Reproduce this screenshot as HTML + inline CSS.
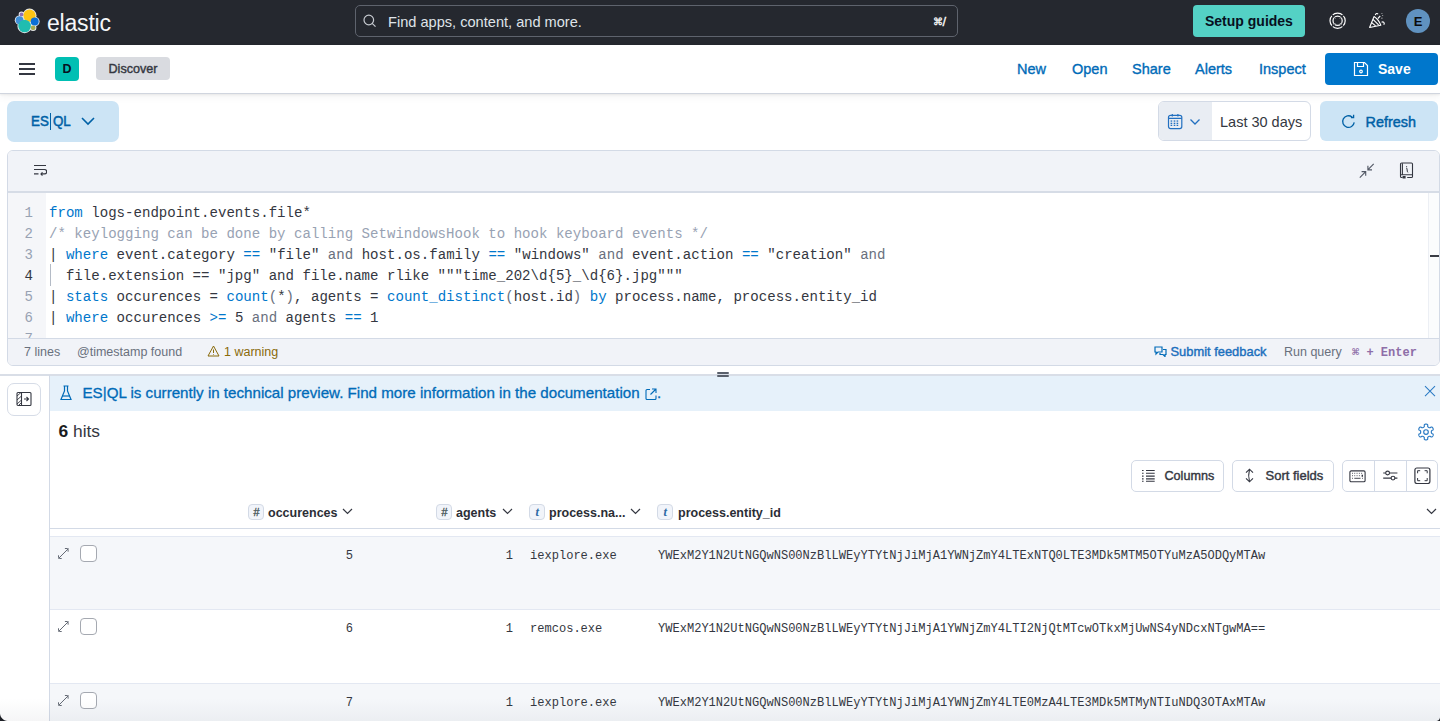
<!DOCTYPE html>
<html><head><meta charset="utf-8">
<style>
*{box-sizing:border-box;margin:0;padding:0}
html,body{width:1440px;height:721px;overflow:hidden;background:#fff;font-family:"Liberation Sans",sans-serif;color:#343741}
.a{position:absolute}
.mono{font-family:"Liberation Mono",monospace}
svg{display:block}
#hdr{left:0;top:0;width:1440px;height:45px;background:#25282f}
#nav2{left:0;top:45px;width:1440px;height:49px;background:#fff;border-bottom:1.5px solid #d0d5de;box-shadow:0 1px 2px rgba(0,0,0,.06),0 3px 8px rgba(0,0,0,.05)}
.lnk{color:#006bb8;font-size:14.5px;top:59.5px;line-height:18px;-webkit-text-stroke:0.35px #006bb8}
#editor{left:7px;top:150px;width:1433px;height:216px;border:1px solid #d3dae6;border-radius:6px;overflow:hidden;background:#fff}
#edhead{left:0;top:0;width:1431px;height:42px;background:#f1f3f8;border-bottom:2px solid #d6dce6}
#gutter{left:0;top:42px;width:38px;height:146px;background:#f5f6f9}
#edfoot{left:0;top:187px;width:1431px;height:28px;background:#f1f3f8;border-top:1px solid #d3dae6}
.code{font-size:14.08px;line-height:21px;white-space:pre;color:#343741}
.kw{color:#0077cc}
.cm{color:#98a2b3}
.op{color:#0077cc}
.gr{color:#69707d}
.ln{font-size:14px;line-height:21px;color:#98a2b3;text-align:right;width:26px}
.ft{font-size:12.5px;color:#69707d;top:344px;line-height:16px}
</style></head>
<body>
<!-- top header -->
<div id="hdr" class="a"></div>
<!-- logo -->
<svg class="a" style="left:14px;top:8px" width="26" height="26" viewBox="0 0 26 26"><g fill="#e9ebee"><circle cx="15.5" cy="7.6" r="7.0"/><circle cx="5.6" cy="12.2" r="4.8"/><circle cx="20.7" cy="13.6" r="4.9"/><circle cx="10.6" cy="18.0" r="7.2"/><circle cx="19.1" cy="19.8" r="3.3"/><circle cx="7.5" cy="6.4" r="2.8"/><path d="M9 9L19 11L17 17L9 15Z"/></g><circle cx="15.5" cy="7.6" r="6.1" fill="#fec514"/><circle cx="5.6" cy="12.2" r="3.9" fill="#3f8fd8"/><circle cx="20.7" cy="13.6" r="4.0" fill="#0b6fd6"/><circle cx="10.6" cy="18.0" r="6.3" fill="#1fbdb0"/><circle cx="19.1" cy="19.8" r="2.4" fill="#a9ab4f"/><circle cx="7.5" cy="6.4" r="1.9" fill="#9170b8"/></svg>
<div class="a" style="left:47px;top:6.5px;font-size:23px;color:#f5f7fa;line-height:32px;letter-spacing:-0.2px">elastic</div>
<!-- search -->
<div class="a" style="left:355px;top:5px;width:603px;height:32px;border:1.3px solid #5e636d;border-radius:5px;background:#25282f"></div>
<svg class="a" style="left:362px;top:13px" width="16" height="16" viewBox="0 0 16 16" fill="none" stroke="#c7cbd1" stroke-width="1.2"><circle cx="6.8" cy="7" r="4.8"/><path d="M10.2 10.4l3.3 3.3"/></svg>
<div class="a" style="left:388px;top:13px;font-size:14.6px;color:#dfe3e8;line-height:18px">Find apps, content, and more.</div>
<div class="a" style="left:933px;top:16px;font-size:10px;font-weight:bold;color:#f0f0f0;line-height:12px">&#8984;</div><div class="a" style="left:942.5px;top:15px;font-size:13px;color:#fff;line-height:14px;-webkit-text-stroke:0.3px #fff">/</div>
<!-- setup guides -->
<div class="a" style="left:1193px;top:5px;width:112px;height:32px;background:#54d1c5;border-radius:4px"></div>
<div class="a" style="left:1205px;top:12px;font-size:14px;font-weight:bold;color:#07101f;line-height:18px">Setup guides</div>
<!-- help icon -->
<svg class="a" style="left:1329px;top:12px" width="18" height="18" viewBox="0 0 18 18" fill="none" stroke="#fff" stroke-width="1.2"><circle cx="8.6" cy="8.8" r="7.6"/><circle cx="8.6" cy="8.8" r="4.6"/><path d="M2.6 2.8l3.2 3.2M14.6 2.8l-3.2 3.2M2.6 14.8l3.2-3.2M14.6 14.8l-3.2-3.2" stroke="#25282f" stroke-width="1.3"/><path d="M4.9 5.1l1.3 1.3M12.3 5.1l-1.3 1.3M4.9 12.5l1.3-1.3M12.3 12.5l-1.3-1.3" stroke-width="0.9"/></svg>
<!-- party icon -->
<svg class="a" style="left:1368px;top:12px" width="19" height="17" viewBox="0 0 19 17" fill="none" stroke="#fff" stroke-width="1.15" stroke-linejoin="round"><path d="M1.6 15.5L6 4.6Q10.5 7.5 12.8 13.2Z"/><path d="M3.7 10.6l3.9 3.3M5 7.4l5.6 5.4"/><path d="M7.3 3.1c.3-1.6 2.1-2.2 2.7-.9M9.8 6.6l2.4-2.6M13.9 1v.6M14.6 3.4v.6M13.9 5.8v.6M13.6 10.2c1.7-.8 3.5.6 2.2 2.6"/></svg>
<!-- avatar -->
<div class="a" style="left:1406px;top:9px;width:24px;height:24px;border-radius:50%;background:#6092c0;color:#0b0c0e;font-size:13px;font-weight:bold;text-align:center;line-height:25px">E</div>

<!-- nav 2 -->
<div id="nav2" class="a"></div>
<div class="a" style="left:19px;top:63px;width:16px;height:2px;background:#343741"></div>
<div class="a" style="left:19px;top:68px;width:16px;height:2px;background:#343741"></div>
<div class="a" style="left:19px;top:73px;width:16px;height:2px;background:#343741"></div>
<div class="a" style="left:55px;top:57px;width:24px;height:24px;border-radius:4px;background:#00bfb3;color:#07101f;font-size:12.5px;font-weight:bold;text-align:center;line-height:24px">D</div>
<div class="a" style="left:96px;top:57px;width:74px;height:23px;border-radius:4px;background:#d9dbe0;color:#343741;font-size:12.6px;-webkit-text-stroke:0.4px #343741;text-align:center;line-height:24px">Discover</div>
<div class="a lnk" style="left:1017px">New</div>
<div class="a lnk" style="left:1072px">Open</div>
<div class="a lnk" style="left:1132px">Share</div>
<div class="a lnk" style="left:1195px">Alerts</div>
<div class="a lnk" style="left:1259px">Inspect</div>
<div class="a" style="left:1325px;top:53px;width:113px;height:32px;border-radius:4px;background:#0077cc"></div>
<svg class="a" style="left:1353px;top:61px" width="16" height="16" viewBox="0 0 16 16" fill="none" stroke="#fff" stroke-width="1.2"><path d="M1.5 1.5h10l3 3v10h-13z"/><path d="M4.5 1.5v4h6v-4"/><circle cx="8" cy="10.5" r="1.3"/></svg>
<div class="a" style="left:1378px;top:59.5px;font-size:14px;font-weight:bold;color:#fff;line-height:18px">Save</div>

<!-- ES|QL button -->
<div class="a" style="left:7px;top:101px;width:112px;height:41px;border-radius:7px;background:#cce4f5"></div>
<div class="a" style="left:30.5px;top:112px;font-size:15.5px;color:#0061a6;line-height:18px;-webkit-text-stroke:0.55px #0061a6;transform:scaleX(0.86);transform-origin:0 0">ES</div>
<div class="a" style="left:50px;top:113px;width:1.4px;height:16.5px;background:#0061a6"></div>
<div class="a" style="left:53px;top:112px;font-size:15.5px;color:#0061a6;line-height:18px;-webkit-text-stroke:0.55px #0061a6;transform:scaleX(0.86);transform-origin:0 0">QL</div>
<svg class="a" style="left:81px;top:116px" width="14" height="10" viewBox="0 0 14 10" fill="none" stroke="#0061a6" stroke-width="1.6"><path d="M1 2l6 6 6-6"/></svg>

<!-- date picker -->
<div class="a" style="left:1158px;top:101px;width:153px;height:40px;border:1px solid #d3dae6;border-radius:6px;background:#fff;overflow:hidden"><div class="a" style="left:0;top:0;width:53px;height:38px;background:#e9edf3"></div></div>
<svg class="a" style="left:1167px;top:113px" width="16" height="17" viewBox="0 0 16 17"><g fill="none" stroke="#2270c0" stroke-width="1.2"><rect x="1.5" y="2.3" width="13.3" height="13.3" rx="2"/><path d="M1.5 5.3h13.3M5.3 1v2.6M10.9 1v2.6"/></g><g fill="#2270c0"><rect x="3.6" y="7.4" width="1.6" height="1.3"/><rect x="3.6" y="9.7" width="1.6" height="1.3"/><rect x="3.6" y="11.7" width="1.6" height="1.3"/><rect x="6.7" y="7.4" width="1.6" height="1.3"/><rect x="6.7" y="9.7" width="1.6" height="1.3"/><rect x="6.7" y="11.7" width="1.6" height="1.3"/><rect x="9.6" y="7.4" width="1.6" height="1.3"/><rect x="9.6" y="9.7" width="1.6" height="1.3"/><rect x="9.6" y="11.7" width="1.6" height="1.3"/></g></svg>
<svg class="a" style="left:1189px;top:118px" width="12" height="8" viewBox="0 0 12 8" fill="none" stroke="#2270c0" stroke-width="1.3"><path d="M1.5 1.5l4.5 4.5 4.5-4.5"/></svg>
<div class="a" style="left:1220px;top:112.7px;font-size:14.5px;color:#343741;line-height:18px">Last 30 days</div>
<div class="a" style="left:1320px;top:101px;width:118px;height:40px;border-radius:6px;background:#cce4f5"></div>
<svg class="a" style="left:1341px;top:114px" width="15" height="15" viewBox="0 0 15 15" fill="none" stroke="#0061a6" stroke-width="1.3"><path d="M13.2 8.3a5.8 5.8 0 1 1-2.2-5.3"/><path d="M12.6 0.8v2.7H9.9"/></svg>
<div class="a" style="left:1365.5px;top:112.7px;font-size:14.4px;color:#0061a6;line-height:18px;-webkit-text-stroke:0.45px #0061a6">Refresh</div>

<!-- editor -->
<div id="editor" class="a">
  <div id="edhead" class="a"></div>
  <div id="gutter" class="a"></div>
  <div id="edfoot" class="a"></div>
</div>

<!-- editor contents -->
<svg class="a" style="left:33px;top:164px" width="14" height="12" viewBox="0 0 14 12" fill="none" stroke="#343741" stroke-width="1.2"><path d="M1 1.5h12M1 5.5h10.5a2.2 2.2 0 0 1 0 4.4H8M1 9.9h4.5"/><path d="M9.5 8.3L8 9.9l1.5 1.6"/></svg>
<svg class="a" style="left:1359px;top:163px" width="16" height="16" viewBox="0 0 16 16" fill="none" stroke="#535966" stroke-width="1.15"><path d="M14.7 0.9L9.3 6.3M8.9 2.8v4.1h4.1M0.8 14.6L6.2 9.2M2.6 8.6h4.1v4.1"/></svg>
<svg class="a" style="left:1399px;top:162px" width="15" height="17" viewBox="0 0 15 17" fill="none" stroke="#343741" stroke-width="1.1"><path d="M3.6 15.5H2.6a1.1 1.1 0 0 1-1.1-1.1V2.2A1.2 1.2 0 0 1 2.7 1h9.7a1.1 1.1 0 0 1 1.1 1.1v12.3a1.1 1.1 0 0 1-1.1 1.1H8.2"/><path d="M3.4 1.2v11.5M1.6 12.8h11.8"/><rect x="3.6" y="14" width="3" height="2.5" fill="#343741" stroke="none"/><path d="M7.6 4.2v1M7.3 6.3h.6l.5 3.5.8.6" stroke-width="1"/></svg>
<div class="a ln mono" style="left:7px;top:203px;height:135px;overflow:hidden">1<br>2<br>3<br><span style="color:#343741">4</span><br>5<br>6<br>7</div>
<div class="a" style="left:49.5px;top:264px;width:1.2px;height:22px;background:#b4bbc6"></div>
<div class="a code mono" style="left:49px;top:203px;height:135px;overflow:hidden"><span class="kw">from</span> logs-endpoint.events.file*
<span class="cm">/* keylogging can be done by calling SetwindowsHook to hook keyboard events */</span>
| <span class="kw">where</span> event.category <span class="op">==</span> "file" <span class="gr">and</span> host.os.family <span class="op">==</span> "windows" <span class="gr">and</span> event.action <span class="op">==</span> "creation" <span class="gr">and</span>
  file.extension == "jpg" and file.name rlike """time_202\d{5}_\d{6}.jpg"""
| <span class="kw">stats</span> occurences = <span class="kw">count</span><span class="gr">(</span>*<span class="gr">)</span>, agents = <span class="kw">count_distinct</span><span class="gr">(</span>host.id<span class="gr">)</span> <span class="kw">by</span> process.name, process.entity_id
| <span class="kw">where</span> occurences <span class="op">&gt;=</span> 5 <span class="gr">and</span> agents <span class="op">==</span> 1
</div>
<div class="a" style="left:1428px;top:193px;width:11px;height:145px;background:#fbfcfd;border-left:1.3px solid #eceff4"></div>
<div class="a" style="left:1429.5px;top:254.5px;width:9.5px;height:2px;background:#3a3d45"></div>
<!-- footer -->
<div class="a ft" style="left:24px">7 lines</div>
<div class="a ft" style="left:77px">@timestamp found</div>
<svg class="a" style="left:207px;top:345px" width="13" height="12" viewBox="0 0 13 12" fill="none" stroke="#8a6a0a" stroke-width="1"><path d="M6.5 1L12 11H1z"/><path d="M6.5 4.5v3.5M6.5 9.2v.6"/></svg>
<div class="a ft" style="left:224px;color:#8a6a0a">1 warning</div>
<svg class="a" style="left:1154px;top:346px" width="13" height="11" viewBox="0 0 13 11" fill="none" stroke="#006bb8" stroke-width="1.2"><path d="M1 1h7v5H4l-2 2V6H1z"/><path d="M9 3.5h3v5h-1v2l-2-2H6V7"/></svg>
<div class="a ft" style="left:1170.5px;color:#1b6fbd;font-size:12.9px;-webkit-text-stroke:0.4px #1b6fbd">Submit feedback</div>
<div class="a ft" style="left:1284px">Run query</div>
<div class="a ft mono" style="left:1352px;top:345px;color:#8e6ea8;font-weight:bold;font-size:12px">&#8984; + Enter</div>

<!-- lower section -->
<div class="a" style="left:0;top:374px;width:1440px;height:2px;background:#d9dee7"></div>
<div class="a" style="left:49px;top:375px;width:1px;height:346px;background:#d3dae6"></div>
<div class="a" style="left:7px;top:383px;width:34px;height:33px;border:1.3px solid #d6dce7;border-radius:7px;background:#fff"></div>
<svg class="a" style="left:16px;top:391px" width="16" height="16" viewBox="0 0 16 16" fill="none" stroke="#343741" stroke-width="1.1"><rect x="1" y="1.5" width="14" height="13" rx="1"/><path d="M5.5 1.5v13"/><path d="M1 5l4-3.5M1 9l4.5-4M1 13l4.5-4M2.5 14.5l3-3" stroke-width=".9"/><path d="M8 8h4.5M10.5 6l2 2-2 2"/></svg>
<div class="a" style="left:50px;top:376px;width:1390px;height:35px;background:#e6f1fa"></div>
<div class="a" style="left:716.5px;top:372px;width:12px;height:2px;border-radius:1px;background:#5a606b"></div>
<div class="a" style="left:716.5px;top:375px;width:12px;height:2px;border-radius:1px;background:#5a606b"></div>
<svg class="a" style="left:60px;top:385px" width="12" height="16" viewBox="0 0 12 16" fill="none" stroke="#006bb8" stroke-width="1.2"><path d="M3.5 1h5M4.5 1v5L1 14.5h10L7.5 6V1"/><path d="M2.5 11h7"/></svg>
<div class="a" style="left:82.5px;top:384px;font-size:15.15px;color:#006bb8;line-height:18px;-webkit-text-stroke:0.3px #006bb8">ES|QL is currently in technical preview. Find more information in the documentation</div>
<svg class="a" style="left:645px;top:388px" width="12" height="12" viewBox="0 0 12 12" fill="none" stroke="#006bb8" stroke-width="1.1"><path d="M5 1.5H2a1 1 0 0 0-1 1v8a1 1 0 0 0 1 1h8a1 1 0 0 0 1-1V7.5M7 1h4v4M11 1L5.5 6.5"/></svg>
<div class="a" style="left:657px;top:384px;font-size:15px;color:#006bb8;line-height:18px;-webkit-text-stroke:0.3px #006bb8">.</div>
<svg class="a" style="left:1424px;top:385px" width="12" height="12" viewBox="0 0 12 12" fill="none" stroke="#2b7bc4" stroke-width="1.05"><path d="M1 1.2l10 10M11 1.2l-10 10"/></svg>

<div class="a" style="left:58.5px;top:421px;font-size:17.4px;color:#343741;line-height:20px"><b style="color:#1a1c21">6</b> hits</div>
<svg class="a" style="left:1417px;top:422.5px" width="18" height="18" viewBox="0 0 18 18" fill="none" stroke="#2b7bc4" stroke-width="1.15" stroke-linejoin="round"><path d="M14.30 9.00 L14.31 9.19 L14.32 9.37 L14.35 9.56 L14.39 9.76 L14.46 9.96 L14.56 10.18 L14.76 10.44 L15.98 11.00 L16.15 11.32 L16.19 11.62 L16.19 11.90 L16.14 12.18 L16.07 12.45 L15.97 12.70 L15.84 12.95 L15.69 13.18 L15.52 13.40 L15.33 13.60 L15.11 13.77 L14.86 13.92 L14.58 14.03 L14.22 14.04 L13.13 13.27 L12.80 13.23 L12.56 13.25 L12.35 13.29 L12.16 13.35 L11.98 13.42 L11.81 13.50 L11.65 13.59 L11.49 13.69 L11.34 13.79 L11.19 13.91 L11.04 14.05 L10.90 14.21 L10.76 14.41 L10.64 14.71 L10.76 16.04 L10.56 16.35 L10.33 16.54 L10.08 16.68 L9.82 16.78 L9.55 16.85 L9.28 16.89 L9.00 16.90 L8.72 16.89 L8.45 16.85 L8.18 16.78 L7.92 16.68 L7.67 16.54 L7.44 16.35 L7.24 16.04 L7.36 14.71 L7.24 14.41 L7.10 14.21 L6.96 14.05 L6.81 13.91 L6.66 13.79 L6.51 13.69 L6.35 13.59 L6.19 13.50 L6.02 13.42 L5.84 13.35 L5.65 13.29 L5.44 13.25 L5.20 13.23 L4.87 13.27 L3.78 14.04 L3.42 14.03 L3.14 13.92 L2.89 13.77 L2.67 13.60 L2.48 13.40 L2.31 13.18 L2.16 12.95 L2.03 12.70 L1.93 12.45 L1.86 12.18 L1.81 11.90 L1.81 11.62 L1.85 11.32 L2.02 11.00 L3.24 10.44 L3.44 10.18 L3.54 9.96 L3.61 9.76 L3.65 9.56 L3.68 9.37 L3.69 9.19 L3.70 9.00 L3.69 8.81 L3.68 8.63 L3.65 8.44 L3.61 8.24 L3.54 8.04 L3.44 7.82 L3.24 7.56 L2.02 7.00 L1.85 6.68 L1.81 6.38 L1.81 6.10 L1.86 5.82 L1.93 5.55 L2.03 5.30 L2.16 5.05 L2.31 4.82 L2.48 4.60 L2.67 4.40 L2.89 4.23 L3.14 4.08 L3.42 3.97 L3.78 3.96 L4.87 4.73 L5.20 4.77 L5.44 4.75 L5.65 4.71 L5.84 4.65 L6.02 4.58 L6.19 4.50 L6.35 4.41 L6.51 4.31 L6.66 4.21 L6.81 4.09 L6.96 3.95 L7.10 3.79 L7.24 3.59 L7.36 3.29 L7.24 1.96 L7.44 1.65 L7.67 1.46 L7.92 1.32 L8.18 1.22 L8.45 1.15 L8.72 1.11 L9.00 1.10 L9.28 1.11 L9.55 1.15 L9.82 1.22 L10.08 1.32 L10.33 1.46 L10.56 1.65 L10.76 1.96 L10.64 3.29 L10.76 3.59 L10.90 3.79 L11.04 3.95 L11.19 4.09 L11.34 4.21 L11.49 4.31 L11.65 4.41 L11.81 4.50 L11.98 4.58 L12.16 4.65 L12.35 4.71 L12.56 4.75 L12.80 4.77 L13.13 4.73 L14.22 3.96 L14.58 3.97 L14.86 4.08 L15.11 4.23 L15.33 4.40 L15.52 4.60 L15.69 4.82 L15.84 5.05 L15.97 5.30 L16.07 5.55 L16.14 5.82 L16.19 6.10 L16.19 6.38 L16.15 6.68 L15.98 7.00 L14.76 7.56 L14.56 7.82 L14.46 8.04 L14.39 8.24 L14.35 8.44 L14.32 8.63 L14.31 8.81Z"/><circle cx="9" cy="9" r="2.3"/></svg>

<!-- toolbar -->
<div class="a" style="left:1131px;top:460px;width:93px;height:32px;border:1px solid #d3dae6;border-radius:5px"></div>
<svg class="a" style="left:1141px;top:469px" width="15" height="13" viewBox="0 0 15 13" fill="none" stroke="#343741" stroke-width="1.1"><path d="M1 1.5h1.6M1 4.3h1.6M1 7.1h1.6M1 9.9h1.6M1 12.2h1.6M5 1.5h8.7M5 4.3h8.7M5 7.1h8.7M5 9.9h8.7M5 12.2h8.7"/></svg>
<div class="a" style="left:1164.5px;top:468px;font-size:12.6px;color:#343741;line-height:16px;-webkit-text-stroke:0.4px #343741">Columns</div>
<div class="a" style="left:1232px;top:460px;width:102px;height:32px;border:1px solid #d3dae6;border-radius:5px"></div>
<svg class="a" style="left:1243px;top:468px" width="13" height="15" viewBox="0 0 13 15" fill="none" stroke="#343741" stroke-width="1.1"><path d="M6.5 1.5Q4.8 7.5 6.5 13.5M3 4.7L6.5 1.2 10 4.7M3 10.3l3.5 3.5 3.5-3.5"/></svg>
<div class="a" style="left:1265.5px;top:468px;font-size:13px;color:#343741;line-height:16px;-webkit-text-stroke:0.4px #343741">Sort fields</div>
<div class="a" style="left:1342px;top:460px;width:96px;height:32px;border:1px solid #d3dae6;border-radius:5px"></div>
<div class="a" style="left:1374px;top:461px;width:1px;height:30px;background:#d3dae6"></div>
<div class="a" style="left:1406px;top:461px;width:1px;height:30px;background:#d3dae6"></div>
<svg class="a" style="left:1349px;top:470px" width="17" height="13" viewBox="0 0 17 13" fill="none" stroke="#343741" stroke-width="1.1"><rect x="0.9" y="0.9" width="15.2" height="10.9" rx="1.3"/><path d="M3 3.3h.9M5.3 3.3h.9M7.6 3.3h.9M9.9 3.3h.9M12.2 3.3h.9M3 5.7h.9M5.3 5.7h.9M7.6 5.7h.9M9.9 5.7h.9M3 8.3h.9M5.3 8.3h6.2M13 8.3h.9" stroke-width=".9"/><path d="M13.3 4.7v2" stroke-width="1.4"/></svg>
<svg class="a" style="left:1382px;top:469px" width="16" height="13" viewBox="0 0 16 13" fill="none" stroke="#343741" stroke-width="1.1"><path d="M1.2 4h14.2M1.2 9.1h14.2"/><circle cx="5.6" cy="4" r="1.9" fill="#fff"/><circle cx="11" cy="9.1" r="1.9" fill="#fff"/></svg>
<svg class="a" style="left:1414px;top:467px" width="17" height="17" viewBox="0 0 17 17" fill="none" stroke="#343741" stroke-width="1.2"><rect x="0.9" y="1" width="15" height="15.5" rx="2"/><path d="M3.6 6.3V3.7h2.6M10.6 3.7h2.6v2.6M13.2 11v2.7h-2.6M6.2 13.7H3.6V11" stroke-width="1"/></svg>

<!-- table header -->
<div class="a" style="left:248.3px;top:504px;width:16px;height:16px;border:1px solid #d3dae6;border-radius:4px;background:#f1f4fa;font-size:11px;color:#3f4f52;text-align:center;line-height:15px;font-style:italic;-webkit-text-stroke:0.3px #3f4f52">#</div>
<div class="a" style="left:268px;top:504px;font-size:12.5px;font-weight:bold;color:#2b2e36;line-height:16px;padding-top:0.5px">occurences</div>
<svg class="a" style="left:342px;top:508px" width="11" height="7" viewBox="0 0 11 7" fill="none" stroke="#343741" stroke-width="1.2"><path d="M1 1l4.5 4.5L10 1"/></svg>
<div class="a" style="left:436.3px;top:504px;width:16px;height:16px;border:1px solid #d3dae6;border-radius:4px;background:#f1f4fa;font-size:11px;color:#3f4f52;text-align:center;line-height:15px;font-style:italic;-webkit-text-stroke:0.3px #3f4f52">#</div>
<div class="a" style="left:456px;top:504px;font-size:12.5px;font-weight:bold;color:#2b2e36;line-height:16px;padding-top:0.5px">agents</div>
<svg class="a" style="left:502px;top:508px" width="11" height="7" viewBox="0 0 11 7" fill="none" stroke="#343741" stroke-width="1.2"><path d="M1 1l4.5 4.5L10 1"/></svg>
<div class="a" style="left:529.3px;top:504px;width:16px;height:16px;border:1px solid #d3dae6;border-radius:4px;background:#f1f4fa;font-size:12.5px;color:#2d6aa5;text-align:center;line-height:15px;font-style:italic;font-weight:bold;font-family:'Liberation Serif',serif">t</div>
<div class="a" style="left:549px;top:504px;font-size:12.5px;font-weight:bold;color:#2b2e36;line-height:16px;padding-top:0.5px">process.na...</div>
<svg class="a" style="left:630px;top:508px" width="11" height="7" viewBox="0 0 11 7" fill="none" stroke="#343741" stroke-width="1.2"><path d="M1 1l4.5 4.5L10 1"/></svg>
<div class="a" style="left:657.3px;top:504px;width:16px;height:16px;border:1px solid #d3dae6;border-radius:4px;background:#f1f4fa;font-size:12.5px;color:#2d6aa5;text-align:center;line-height:15px;font-style:italic;font-weight:bold;font-family:'Liberation Serif',serif">t</div>
<div class="a" style="left:678px;top:504px;font-size:12.5px;font-weight:bold;color:#2b2e36;line-height:16px;padding-top:0.5px">process.entity_id</div>
<svg class="a" style="left:1426px;top:508px" width="11" height="7" viewBox="0 0 11 7" fill="none" stroke="#343741" stroke-width="1.2"><path d="M1 1l4.5 4.5L10 1"/></svg>
<div class="a" style="left:50px;top:528px;width:1390px;height:1px;background:#d3dae6"></div>

<!-- rows -->
<div class="a" style="left:50px;top:536px;width:1390px;height:73px;background:#f5f7fa;border-top:1px solid #e3e8f2"></div>
<div class="a" style="left:50px;top:609px;width:1390px;height:74px;background:#fff;border-top:1px solid #e3e8f2"></div>
<div class="a" style="left:50px;top:683px;width:1390px;height:38px;background:#f5f7fa;border-top:1px solid #e3e8f2"></div>
<svg class="a" style="left:57px;top:547px" width="13" height="13" viewBox="0 0 13 13" fill="none" stroke="#646a75" stroke-width="1" stroke-linecap="round"><path d="M1.8 11.2l9.4-9.4M8.3 1.5h1.8a1 1 0 0 1 1 1v1.8M1.5 8.7v1.8a1 1 0 0 0 1 1h1.8"/></svg>
<div class="a" style="left:80px;top:545px;width:16.5px;height:16.5px;border:1.3px solid #a5a9b1;border-radius:4px;background:#fff"></div>
<div class="a mono" style="left:300px;top:547.5px;width:53px;text-align:right;font-size:12.06px;line-height:17px;color:#343741">5</div>
<div class="a mono" style="left:460px;top:547.5px;width:53px;text-align:right;font-size:12.06px;line-height:17px;color:#343741">1</div>
<div class="a mono" style="left:530px;top:547.5px;font-size:12.06px;line-height:17px;color:#343741">iexplore.exe</div>
<div class="a mono" style="left:658px;top:547.5px;font-size:12.06px;line-height:17px;color:#343741">YWExM2Y1N2UtNGQwNS00NzBlLWEyYTYtNjJiMjA1YWNjZmY4LTExNTQ0LTE3MDk5MTM5OTYuMzA5ODQyMTAw</div>
<svg class="a" style="left:57px;top:620px" width="13" height="13" viewBox="0 0 13 13" fill="none" stroke="#646a75" stroke-width="1" stroke-linecap="round"><path d="M1.8 11.2l9.4-9.4M8.3 1.5h1.8a1 1 0 0 1 1 1v1.8M1.5 8.7v1.8a1 1 0 0 0 1 1h1.8"/></svg>
<div class="a" style="left:80px;top:618px;width:16.5px;height:16.5px;border:1.3px solid #a5a9b1;border-radius:4px;background:#fff"></div>
<div class="a mono" style="left:300px;top:620.5px;width:53px;text-align:right;font-size:12.06px;line-height:17px;color:#343741">6</div>
<div class="a mono" style="left:460px;top:620.5px;width:53px;text-align:right;font-size:12.06px;line-height:17px;color:#343741">1</div>
<div class="a mono" style="left:530px;top:620.5px;font-size:12.06px;line-height:17px;color:#343741">remcos.exe</div>
<div class="a mono" style="left:658px;top:620.5px;font-size:12.06px;line-height:17px;color:#343741">YWExM2Y1N2UtNGQwNS00NzBlLWEyYTYtNjJiMjA1YWNjZmY4LTI2NjQtMTcwOTkxMjUwNS4yNDcxNTgwMA==</div>
<svg class="a" style="left:57px;top:694px" width="13" height="13" viewBox="0 0 13 13" fill="none" stroke="#646a75" stroke-width="1" stroke-linecap="round"><path d="M1.8 11.2l9.4-9.4M8.3 1.5h1.8a1 1 0 0 1 1 1v1.8M1.5 8.7v1.8a1 1 0 0 0 1 1h1.8"/></svg>
<div class="a" style="left:80px;top:692px;width:16.5px;height:16.5px;border:1.3px solid #a5a9b1;border-radius:4px;background:#fff"></div>
<div class="a mono" style="left:300px;top:694.5px;width:53px;text-align:right;font-size:12.06px;line-height:17px;color:#343741">7</div>
<div class="a mono" style="left:460px;top:694.5px;width:53px;text-align:right;font-size:12.06px;line-height:17px;color:#343741">1</div>
<div class="a mono" style="left:530px;top:694.5px;font-size:12.06px;line-height:17px;color:#343741">iexplore.exe</div>
<div class="a mono" style="left:658px;top:694.5px;font-size:12.06px;line-height:17px;color:#343741">YWExM2Y1N2UtNGQwNS00NzBlLWEyYTYtNjJiMjA1YWNjZmY4LTE0MzA4LTE3MDk5MTMyNTIuNDQ3OTAxMTAw</div>
<div class="a" style="left:0;top:698px;width:1440px;height:23px;background:linear-gradient(rgba(30,40,60,0),rgba(30,40,60,0.045))"></div>
<div class="a" style="left:0;top:713px;width:8px;height:8px;background:radial-gradient(circle at 8px 0px, transparent 7.5px, #1d1f25 8.5px)"></div>
<div class="a" style="left:1436px;top:717px;width:4px;height:4px;background:radial-gradient(circle at 0px 0px, transparent 3.5px, #1d1f25 4.5px)"></div>
</body></html>
